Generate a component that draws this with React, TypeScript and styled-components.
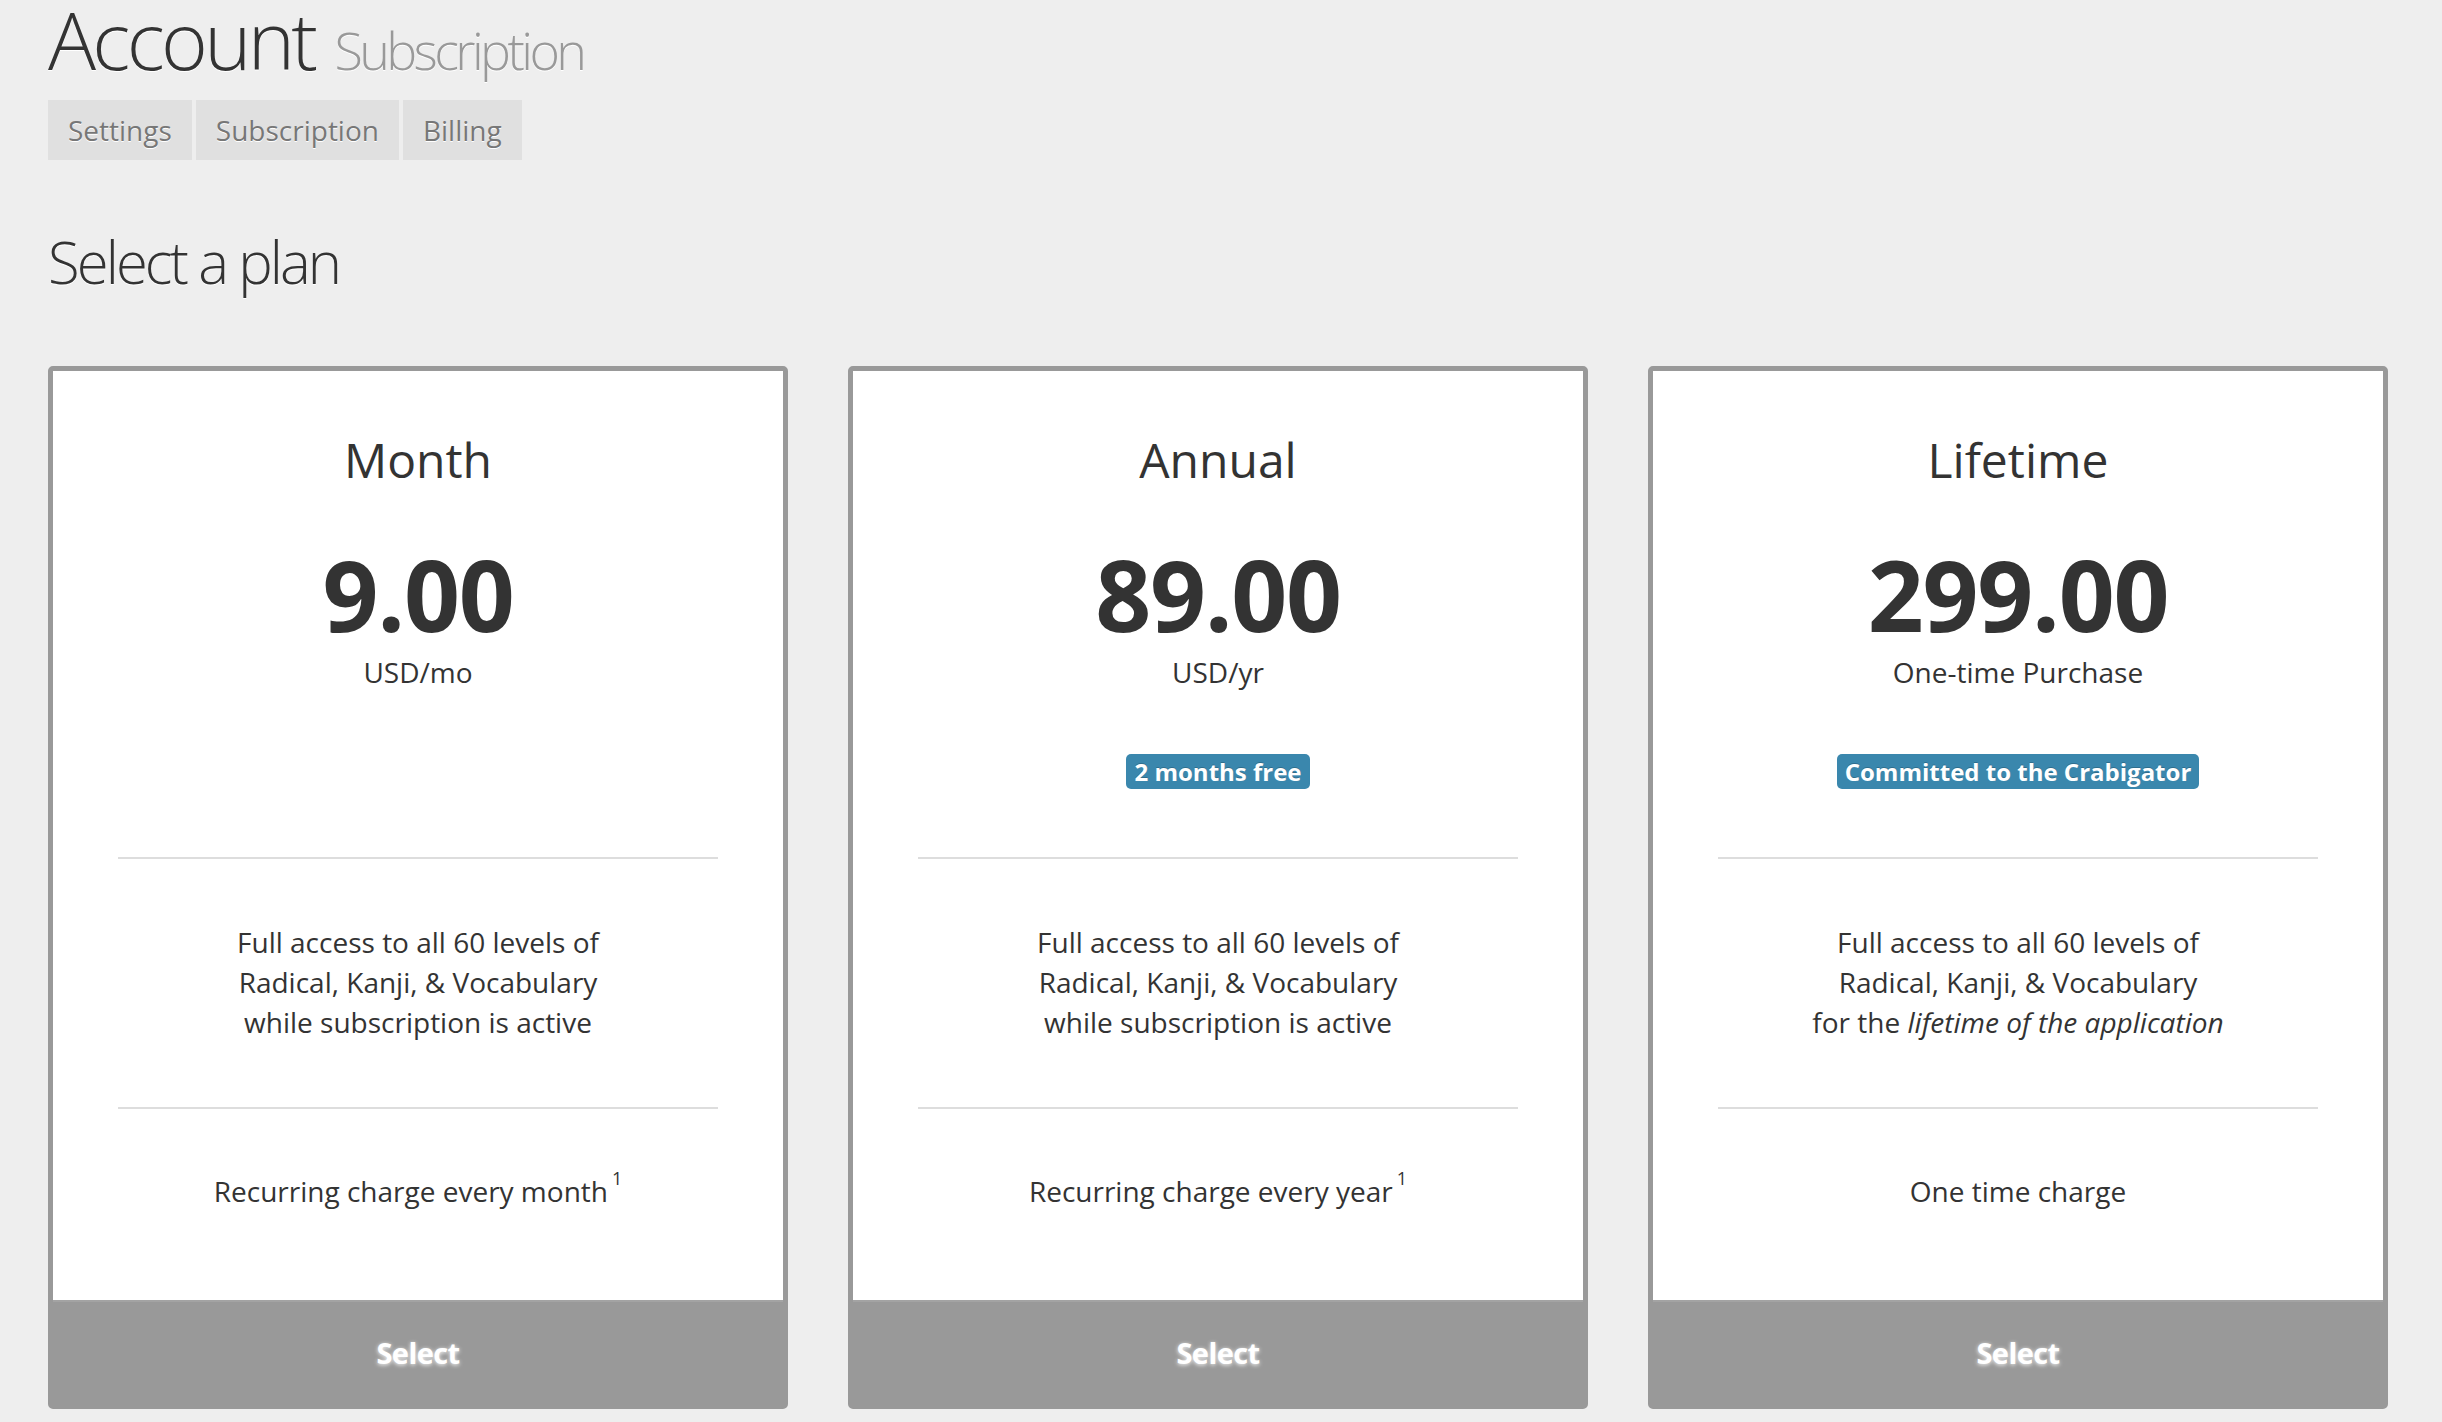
import React from 'react';
import styled, { createGlobalStyle } from 'styled-components';

const GlobalStyle = createGlobalStyle`
  html, body {
    margin: 0;
    padding: 0;
    background: #eeeeee;
  }
  body {
    font-family: "Open Sans", "DejaVu Sans", sans-serif;
    color: #333333;
  }
`;

const Page = styled.div`
  padding-left: 48px;
  width: 2340px;
`;

const Title = styled.h1`
  margin: 0;
  font-weight: 300;
  font-size: 80px;
  line-height: 78px;
  color: #333333;
  letter-spacing: -3.7px;
  text-shadow: 0 1px 0 #ffffff;
`;

const TitleSmall = styled.small`
  font-size: 52px;
  line-height: 0;
  color: #999999;
  letter-spacing: -3.6px;
  margin-left: 3px;
`;

const Tabs = styled.nav`
  display: flex;
  gap: 4px;
  margin-top: 22px;
`;

const Tab = styled.a`
  display: block;
  height: 60px;
  line-height: 60px;
  padding: 0 20px;
  background: #e0e0e0;
  color: #777777;
  font-size: 28px;
  text-decoration: none;
  text-shadow: 0 1px 0 #ffffff;
`;

const SectionTitle = styled.h2`
  margin: 67px 0 0;
  font-weight: 300;
  font-size: 58px;
  line-height: 70px;
  letter-spacing: -2.9px;
  color: #333333;
  text-shadow: 0 1px 0 #ffffff;
`;

const Plans = styled.div`
  display: grid;
  grid-template-columns: repeat(3, 740px);
  gap: 60px;
  margin-top: 69px;
`;

const Card = styled.div`
  border: 5px solid #999999;
  border-radius: 5px;
  background: #ffffff;
  display: flex;
  flex-direction: column;
  overflow: hidden;
`;

const CardBody = styled.div`
  padding: 61px 65px 89px;
  text-align: center;
`;

const PlanName = styled.div`
  font-size: 48px;
  line-height: 56px;
  font-weight: 400;
  color: #333333;
`;

const Price = styled.div`
  margin-top: 61px;
  font-size: 98px;
  line-height: 90px;
  font-weight: 700;
  letter-spacing: -1.3px;
  color: #333333;
`;

const Unit = styled.div`
  margin-top: 15px;
  font-size: 28px;
  line-height: 36px;
  color: #333333;
`;

const BadgeRow = styled.div`
  margin-top: 64px;
  height: 35px;
  display: flex;
  justify-content: center;
`;

const Badge = styled.span`
  display: inline-block;
  background: #3a87ad;
  color: #ffffff;
  font-weight: 700;
  font-size: 24px;
  line-height: 35px;
  padding: 0 8px;
  border-radius: 5px;
  text-shadow: 0 -1px 0 rgba(0, 0, 0, 0.2);
`;

const Divider = styled.hr<{ $gap: number }>`
  border: 0;
  margin: ${(p) => p.$gap}px 0 0;
  height: 2px;
  background: #dddddd;
`;

const Features = styled.p`
  margin: 63px 0 0;
  font-size: 28px;
  line-height: 40px;
  color: #333333;
`;

const Charge = styled.p`
  margin: 62px 0 0;
  font-size: 28px;
  line-height: 40px;
  color: #333333;
`;

const Footnote = styled.sup`
  font-size: 18px;
  line-height: 0;
  vertical-align: 17px;
  margin-left: 4px;
`;

const SelectButton = styled.button`
  display: block;
  width: 100%;
  height: 104px;
  border: 0;
  border-top: 2px solid #a3a3a3;
  background: #999999;
  color: #ffffff;
  font-family: "Open Sans", "DejaVu Sans", sans-serif;
  font-weight: 700;
  font-size: 29px;
  line-height: 100px;
  letter-spacing: -0.6px;
  text-shadow: 0 1px 4px rgba(255, 255, 255, 0.95);
  cursor: pointer;
  padding: 0;
`;

type Plan = {
  name: string;
  price: string;
  unit: string;
  badge?: string;
  features: React.ReactNode;
  charge: string;
  footnote: boolean;
};

const plans: Plan[] = [
  {
    name: 'Month',
    price: '9.00',
    unit: 'USD/mo',
    features: (
      <>
        Full access to all 60 levels of
        <br />
        Radical, Kanji, &amp; Vocabulary
        <br />
        while subscription is active
      </>
    ),
    charge: 'Recurring charge every month',
    footnote: true,
  },
  {
    name: 'Annual',
    price: '89.00',
    unit: 'USD/yr',
    badge: '2 months free',
    features: (
      <>
        Full access to all 60 levels of
        <br />
        Radical, Kanji, &amp; Vocabulary
        <br />
        while subscription is active
      </>
    ),
    charge: 'Recurring charge every year',
    footnote: true,
  },
  {
    name: 'Lifetime',
    price: '299.00',
    unit: 'One-time Purchase',
    badge: 'Committed to the Crabigator',
    features: (
      <>
        Full access to all 60 levels of
        <br />
        Radical, Kanji, &amp; Vocabulary
        <br />
        for the <em>lifetime of the application</em>
      </>
    ),
    charge: 'One time charge',
    footnote: false,
  },
];

export default function App() {
  return (
    <>
      <GlobalStyle />
      <Page>
        <Title>
          Account <TitleSmall>Subscription</TitleSmall>
        </Title>
        <Tabs>
          <Tab href="#">Settings</Tab>
          <Tab href="#">Subscription</Tab>
          <Tab href="#">Billing</Tab>
        </Tabs>
        <SectionTitle>Select a plan</SectionTitle>
        <Plans>
          {plans.map((p) => (
            <Card key={p.name}>
              <CardBody>
                <PlanName>{p.name}</PlanName>
                <Price>{p.price}</Price>
                <Unit>{p.unit}</Unit>
                <BadgeRow>{p.badge && <Badge>{p.badge}</Badge>}</BadgeRow>
                <Divider $gap={68} />
                <Features>{p.features}</Features>
                <Divider $gap={65} />
                <Charge>
                  {p.charge}
                  {p.footnote && <Footnote>1</Footnote>}
                </Charge>
              </CardBody>
              <SelectButton>Select</SelectButton>
            </Card>
          ))}
        </Plans>
      </Page>
    </>
  );
}
